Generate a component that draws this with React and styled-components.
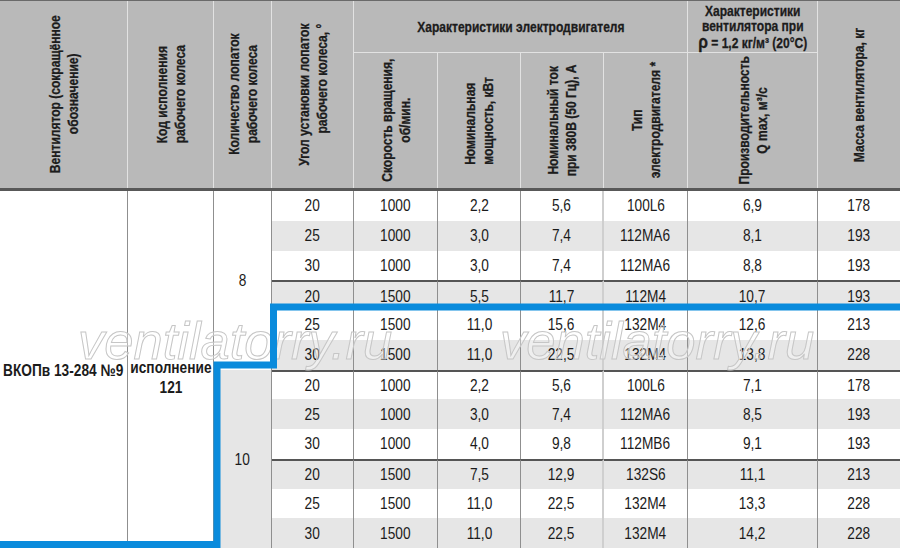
import React from "react";
import styled, { createGlobalStyle } from "styled-components";

const GlobalStyle = createGlobalStyle`
  html, body {
    margin: 0;
    padding: 0;
    background: #fff;
  }
  body {
    font-family: "Liberation Sans", Arial, sans-serif;
    color: #1b1b1b;
  }
`;

const COLS = "128px 86px 58px 82px 84px 83px 83px 84px 130px 82px";
const SQUEEZE = 0.83;

const Page = styled.div`
  position: relative;
  width: 900px;
  height: 548px;
  overflow: hidden;
`;

const Head = styled.div`
  display: grid;
  grid-template-columns: ${COLS};
  grid-template-rows: 52px 135px;
  background: #b9b9b9;
  border-top: 1px solid #6a6a6a;
  border-bottom: 3px solid #585858;
  font-weight: 700;
  font-size: 14.5px;
  color: #1c1c1c;
  -webkit-text-stroke: 0.3px #1c1c1c;
`;

const HCell = styled.div`
  grid-column: ${(p) => p.$col};
  grid-row: ${(p) => p.$row};
  display: flex;
  align-items: center;
  justify-content: center;
  text-align: center;
  line-height: 15px;
  border-right: ${(p) => (p.$last ? "none" : "1px solid #e2e2e2")};
  border-bottom: ${(p) => (p.$group ? "1px solid #e2e2e2" : "none")};
  box-sizing: border-box;
  white-space: nowrap;
`;

const HText = styled.div`
  transform: scaleX(${SQUEEZE});
  padding-top: 2px;
`;

const VText = styled.div`
  writing-mode: vertical-rl;
  transform: rotate(180deg) scaleY(${SQUEEZE});
  text-align: ${(p) => p.$align || "center"};
  line-height: 18px;
  white-space: nowrap;
`;

const Rho = styled.span`
  font-size: 19px;
  line-height: 15px;
`;

const Body = styled.div`
  display: grid;
  grid-template-columns: ${COLS};
  grid-template-rows: repeat(12, 1fr);
  height: 357px;
  font-size: 16.5px;
`;

const Cell = styled.div`
  display: flex;
  align-items: center;
  justify-content: center;
  box-sizing: border-box;
  background: ${(p) => (p.$shade ? "#e6e6e6" : "#fff")};
  border-right: ${(p) =>
    p.$light ? "2px solid #cfcfcf" : p.$last ? "none" : "1px solid #8f8f8f"};
  border-top: ${(p) => (p.$sep ? "2px solid #555" : "none")};
`;

const SpanCell = styled(Cell)`
  grid-column: ${(p) => p.$col};
  grid-row: ${(p) => p.$row};
  font-weight: ${(p) => (p.$bold ? 700 : 400)};
  justify-content: ${(p) => (p.$left ? "flex-start" : "center")};
  padding-left: ${(p) => (p.$left ? "3px" : "0")};
  padding-top: ${(p) => p.$drop || 0}px;
  text-align: center;
  line-height: 20px;
  white-space: nowrap;
`;

const Narrow = styled.span`
  display: inline-block;
  transform: scaleX(${SQUEEZE});
  transform-origin: ${(p) => (p.$left ? "left center" : "center")};
`;

const Watermark = styled.span`
  position: absolute;
  top: 316px;
  left: ${(p) => p.$left}px;
  font-family: "Liberation Sans", Arial, sans-serif;
  font-style: italic;
  font-size: 52.5px;
  line-height: 50px;
  color: rgba(255, 255, 255, 0.35);
  -webkit-text-stroke: 1px #c6c6c6;
  pointer-events: none;
`;

const Outline = styled.svg`
  position: absolute;
  left: 0;
  top: 0;
  pointer-events: none;
`;

const rows8 = [
  ["20", "1000", "2,2", "5,6", "100L6", "6,9", "178"],
  ["25", "1000", "3,0", "7,4", "112MA6", "8,1", "193"],
  ["30", "1000", "3,0", "7,4", "112MA6", "8,8", "193"],
  ["20", "1500", "5,5", "11,7", "112M4", "10,7", "193"],
  ["25", "1500", "11,0", "15,6", "132M4", "12,6", "213"],
  ["30", "1500", "11,0", "22,5", "132M4", "13,8", "228"],
];

const rows10 = [
  ["20", "1000", "2,2", "5,6", "100L6", "7,1", "178"],
  ["25", "1000", "3,0", "7,4", "112MA6", "8,5", "193"],
  ["30", "1000", "4,0", "9,8", "112MB6", "9,1", "193"],
  ["20", "1500", "7,5", "12,9", "132S6", "11,1", "213"],
  ["25", "1500", "11,0", "22,5", "132M4", "13,3", "228"],
  ["30", "1500", "11,0", "22,5", "132M4", "14,2", "228"],
];

function DataRows({ rows, blockStart }) {
  return rows.flatMap((row, i) =>
    row.map((v, j) => (
      <Cell
        key={`${blockStart}-${i}-${j}`}
        $shade={i % 2 === 1}
        $sep={i === 3 || (i === 0 && blockStart > 0)}
        $light={j === 3}
        $last={j === row.length - 1}
      >
        <Narrow>{v}</Narrow>
      </Cell>
    ))
  );
}

export default function App() {
  return (
    <Page>
      <GlobalStyle />
      <Head>
        <HCell $col="1" $row="1 / span 2">
          <VText>
            Вентилятор (сокращённое
            <br />
            обозначение)
          </VText>
        </HCell>
        <HCell $col="2" $row="1 / span 2">
          <VText $align="start">
            Код исполнения
            <br />
            рабочего колеса
          </VText>
        </HCell>
        <HCell $col="3" $row="1 / span 2">
          <VText>
            Количество лопаток
            <br />
            рабочего колеса
          </VText>
        </HCell>
        <HCell $col="4" $row="1 / span 2">
          <VText $align="end">
            Угол установки лопаток
            <br />
            рабочего колеса, °
          </VText>
        </HCell>
        <HCell $col="5 / span 4" $row="1" $group>
          <HText>Характеристики электродвигателя</HText>
        </HCell>
        <HCell $col="9" $row="1" $group>
          <HText>
            Характеристики
            <br />
            вентилятора при
            <br />
            <Rho>ρ</Rho> = 1,2 кг/м³ (20°С)
          </HText>
        </HCell>
        <HCell $col="10" $row="1 / span 2" $last>
          <VText>Масса вентилятора, кг</VText>
        </HCell>
        <HCell $col="5" $row="2">
          <VText>
            Скорость вращения,
            <br />
            об/мин.
          </VText>
        </HCell>
        <HCell $col="6" $row="2">
          <VText $align="start">
            Номинальная
            <br />
            мощность, кВт
          </VText>
        </HCell>
        <HCell $col="7" $row="2">
          <VText>
            Номинальный ток
            <br />
            при 380В (50 Гц), А
          </VText>
        </HCell>
        <HCell $col="8" $row="2">
          <VText>
            Тип
            <br />
            электродвигателя *
          </VText>
        </HCell>
        <HCell $col="9" $row="2">
          <VText>
            Производительность
            <br />
            Q max, м³/с
          </VText>
        </HCell>
      </Head>

      <Body>
        <SpanCell $col="1" $row="1 / span 12" $bold $left $drop={-4}>
          <Narrow $left>ВКОПв 13-284 №9</Narrow>
        </SpanCell>
        <SpanCell $col="2" $row="1 / span 12" $bold $drop={14}>
          <Narrow>
            исполнение
            <br />
            121
          </Narrow>
        </SpanCell>
        <SpanCell $col="3" $row="1 / span 6">
          <Narrow>8</Narrow>
        </SpanCell>
        <SpanCell $col="3" $row="7 / span 6" $shade>
          <Narrow>10</Narrow>
        </SpanCell>
        <DataRows rows={rows8} blockStart={0} />
        <DataRows rows={rows10} blockStart={6} />
      </Body>

      <Watermark $left={78}>ventilatorry.ru</Watermark>
      <Watermark $left={500}>ventilatorry.ru</Watermark>

      <Outline width="900" height="548" viewBox="0 0 900 548">
        <polyline
          points="904,307 273.5,307 273.5,365 217,365 217,544.5 -4,544.5"
          fill="none"
          stroke="#0a8bdc"
          strokeWidth="7"
          strokeLinejoin="miter"
        />
      </Outline>
    </Page>
  );
}
